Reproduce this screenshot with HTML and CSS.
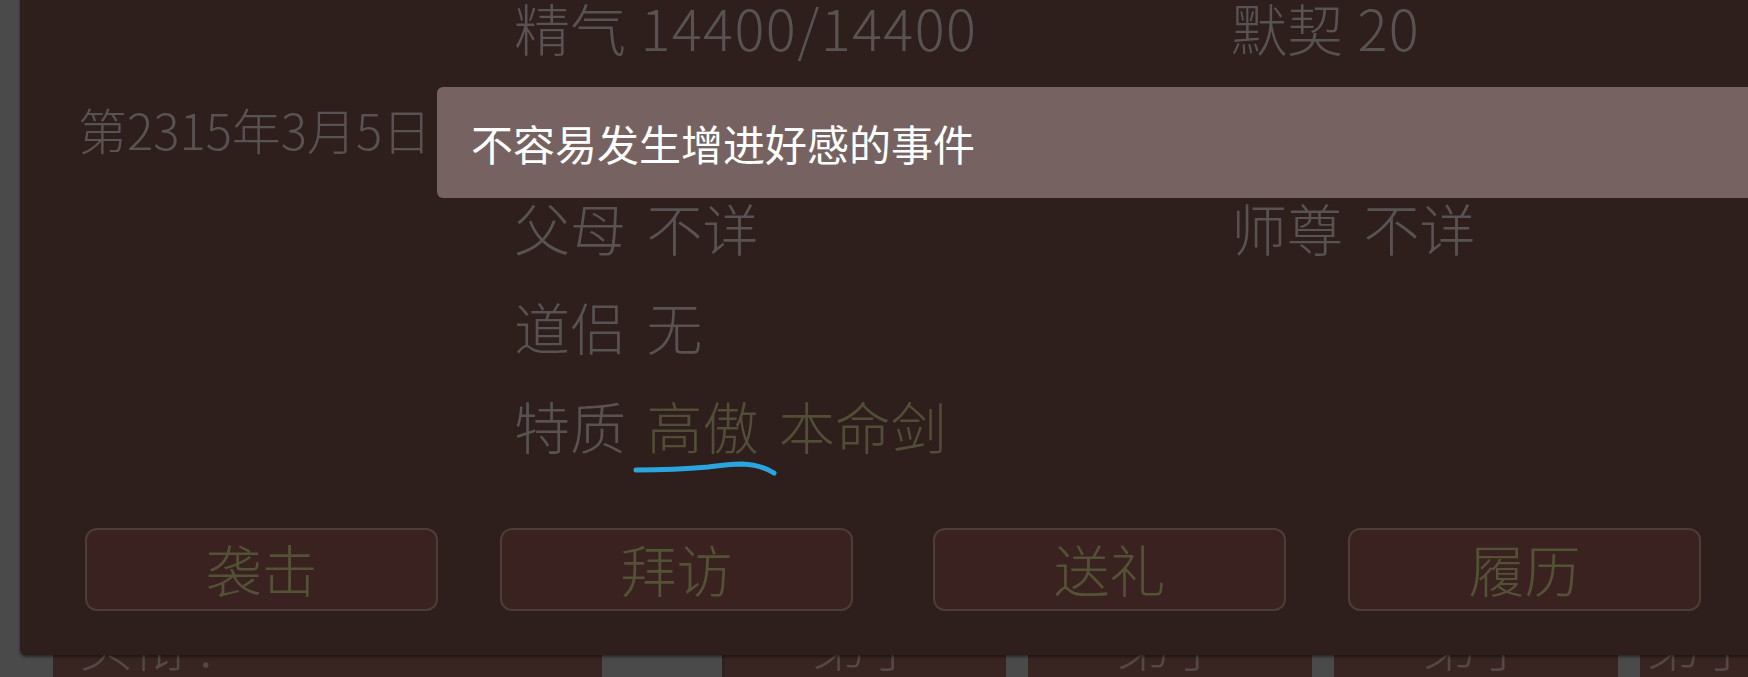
FILE: index.html
```html
<!DOCTYPE html>
<html lang="zh-CN">
<head>
    <meta charset="UTF-8">
    <title>人物详情</title>
    <link rel="stylesheet" href="styles.css">
</head>
<body>

<div class="scene">
    <div class="card-row">
        <div class="card card-wide"><span class="card-text">头衔 .</span></div>
        <div class="card card-first"><span class="card-text">弟子</span></div>
        <div class="card"><span class="card-text">弟子</span></div>
        <div class="card"><span class="card-text">弟子</span></div>
        <div class="card card-last"><span class="card-text">弟子</span></div>
    </div>

    <div class="modal">
        <div class="info">
            <div class="cell left num">精气 <span class="digits">14400/14400</span></div>
            <div class="cell right num">默契 <span class="digits">20</span></div>

            <div class="cell date">第2315年3月5日</div>
            <div class="cell left"></div>
            <div class="cell right"></div>

            <div class="cell left">父母 不详</div>
            <div class="cell right">师尊 不详</div>

            <div class="cell left">道侣 无</div>

            <div class="cell left">特质 <span class="trait">高傲</span> <span class="trait">本命剑</span></div>
        </div>

        <div class="actions">
            <button class="btn">袭击</button>
            <button class="btn">拜访</button>
            <button class="btn btn-shift">送礼</button>
            <button class="btn">履历</button>
        </div>

        <!-- pen mark under the trait -->
        <svg class="pen-mark" width="150" height="22" viewBox="0 0 150 22">
            <path d="M6 12 Q 45 12 78 9 Q 100 6 112 6 Q 132 7 144 15" fill="none" stroke="#2aa6de" stroke-width="5" stroke-linecap="round"/>
        </svg>
    </div>

    <div class="tooltip">不容易发生增进好感的事件</div>
</div>

</body>
</html>
```

FILE: styles.css
```css
body {
    margin: 0;
    background-color: #4a4a4a;
    font-family: "Noto Sans CJK SC", "Noto Sans", sans-serif;
    overflow: hidden;
}
.scene {
    position: relative;
    width: 1748px;
    height: 677px;
    display: flex;
    flex-direction: column;
    justify-content: flex-end;
    overflow: hidden;
}

/* cards behind the dialog */
.card-row {
    display: flex;
    gap: 22px;
    height: 80px;
    padding-left: 53px;
}
.card {
    flex: 0 0 284px;
    background-color: #382522;
    text-align: center;
    padding-top: 20px;
    box-sizing: border-box;
    overflow: hidden;
}
.card-wide {
    flex-basis: 549px;
    text-align: left;
    padding-left: 26px;
}
.card-first {
    margin-left: 98px;
    border-left: 3px solid #2f2320;
}
.card-last {
    flex-basis: 120px;
}
.card-text {
    font-size: 54px;
    line-height: 54px;
    font-weight: 300;
    color: #544845;
}

/* dialog */
.modal {
    position: absolute;
    left: 20px;
    top: -20px;
    right: -20px;
    bottom: 22px;
    background-color: #2e1e1c;
    border-radius: 6px;
    box-shadow: 0 2px 3px rgba(0, 0, 0, 0.45);
}
.info {
    display: grid;
    grid-template-columns: 436px 717px 1fr;
    grid-auto-rows: 99px;
    padding-left: 58px;
    color: #585352;
    font-weight: 300;
}
.cell {
    white-space: pre;
    word-spacing: 8px;
    font-size: 56px;
    line-height: 97px;
}
.num {
    word-spacing: 2px;
    line-height: 94px;
}
.digits {
    letter-spacing: 1.4px;
}
.left {
    grid-column: 2;
}
.right {
    grid-column: 3;
}
.date {
    grid-column: 1;
    font-size: 49px;
    line-height: 99px;
    word-spacing: 0;
}
.trait {
    color: #524d37;
}

.actions {
    display: flex;
    gap: 62px;
    margin-top: 53px;
    padding-left: 65px;
}
.btn {
    width: 353px;
    height: 83px;
    background-color: #3a2221;
    border: 2px solid #4e3c39;
    border-radius: 12px;
    color: #545236;
    font-family: inherit;
    font-size: 56px;
    font-weight: 300;
    line-height: 1;
    padding: 0 0 4px;
}
.btn-shift {
    margin-left: 18px;
}

.pen-mark {
    position: absolute;
    left: 610px;
    top: 478px;
}

.tooltip {
    position: absolute;
    left: 437px;
    top: 87px;
    right: -10px;
    height: 111px;
    display: flex;
    align-items: center;
    padding-left: 34px;
    background-color: #766361;
    border-radius: 6px;
    color: #ffffff;
    font-size: 42px;
}
```
